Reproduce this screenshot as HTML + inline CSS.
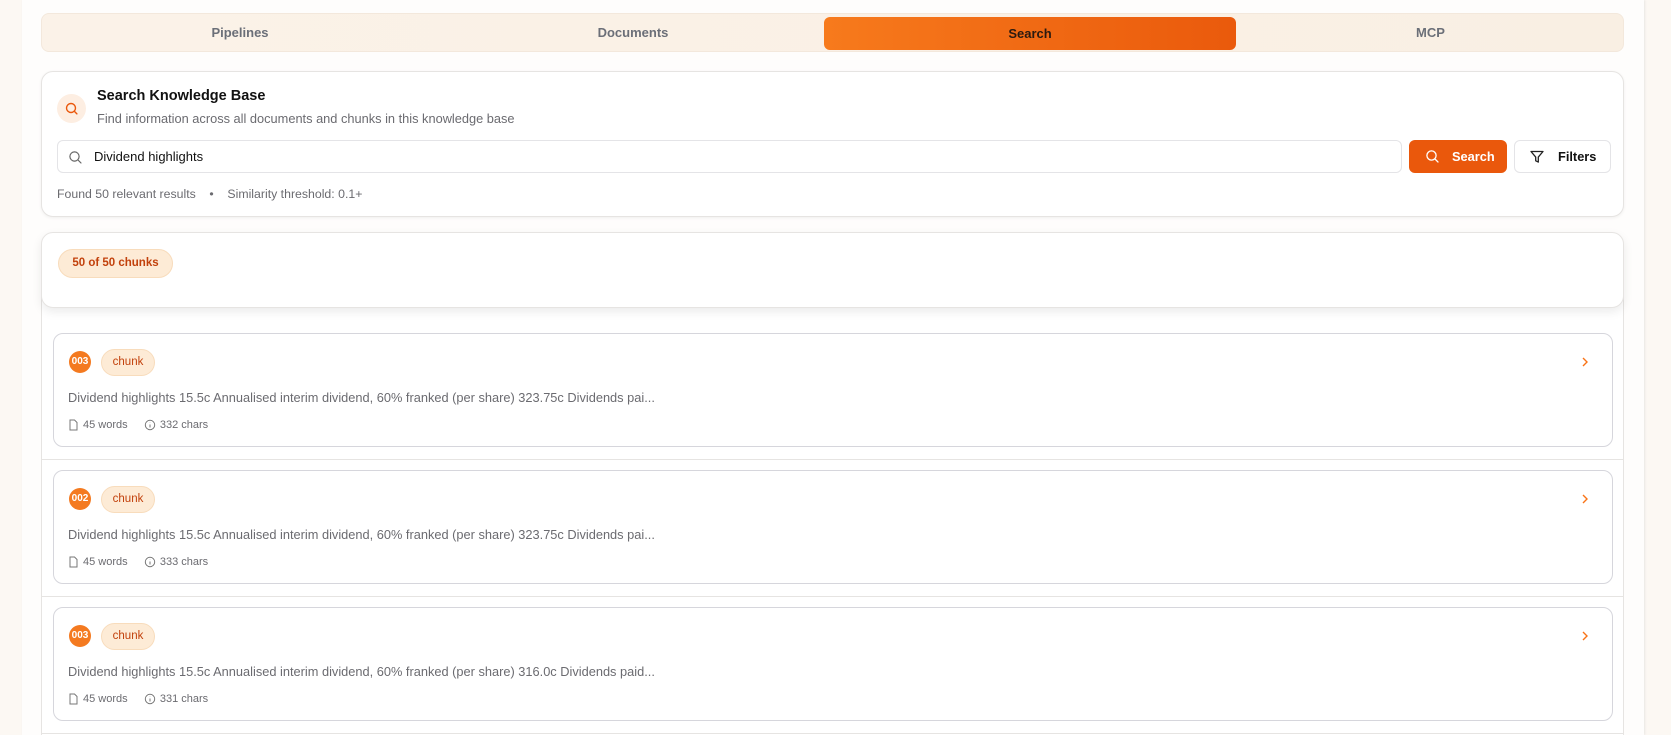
<!DOCTYPE html>
<html><head><meta charset="utf-8"><style>
*{box-sizing:border-box;margin:0;padding:0}
body{width:1671px;height:735px;overflow:hidden;background:#fcf8f3;font-family:"Liberation Sans","DejaVu Sans",sans-serif;position:relative}
.col{position:absolute;left:22px;top:0;width:1622px;height:735px;background:#fefdfc;box-shadow:1px 0 2px #e8e6e4}
.abs{position:absolute}
.tabs{left:41px;top:13px;width:1583px;height:39px;border-radius:8px;background:linear-gradient(90deg,#fbf2e8,#f9efe3);border:1px solid #f3e8dc}
.tab{position:absolute;top:0;height:37px;line-height:37px;text-align:center;font-size:13px;font-weight:bold;color:#6b6f78}
.act{left:782px;top:3px;height:33px;width:412px;border-radius:6px;background:linear-gradient(90deg,#f77a1c,#ea5a0c);color:#2a1a10;line-height:33px}
.card{background:#fff;border:1px solid #e6e4e2;border-radius:12px}
.chunk{position:absolute;left:53px;width:1560px;height:114px;border:1px solid #d6d6dc;border-radius:10px;background:#fff}
.num{position:absolute;left:15px;top:17px;width:22px;height:22px;border-radius:50%;background:#f47a20;color:#fff;font-size:10px;font-weight:bold;text-align:center;line-height:22px}
.pill{position:absolute;left:47px;top:15px;width:54px;height:27px;border-radius:14px;background:#fdebd6;border:1px solid #f8dcbc;color:#c2410c;font-size:11.5px;text-align:center;line-height:25px}
.txt{position:absolute;left:14px;top:56px;font-size:12.8px;color:#6b6b70;white-space:nowrap}
.meta{position:absolute;left:14px;top:85px;font-size:11px;color:#6b6b70;display:flex;align-items:center;gap:4px}
.chev{position:absolute;right:22px;top:22px}
.sep{position:absolute;left:41px;width:1583px;height:1px;background:#e6e4e2}
</style></head><body>
<div class="col"></div>
<div class="abs tabs">
<div class="tab" style="left:0;width:396px">Pipelines</div>
<div class="tab" style="left:396px;width:390px">Documents</div>
<div class="tab act">Search</div>
<div class="tab" style="left:1194px;width:389px">MCP</div>
</div>

<div class="abs card" style="left:41px;top:71px;width:1583px;height:146px;box-shadow:0 1px 3px rgba(0,0,0,.06)">
<div class="abs" style="left:15px;top:22px;width:29px;height:29px;border-radius:50%;background:#fdeee2"><svg width="29" height="29" viewBox="0 0 29 29"><circle cx="14" cy="14" r="4.5" fill="none" stroke="#ea580c" stroke-width="1.4"/><path d="M17.3 17.3l2.6 2.6" stroke="#ea580c" stroke-width="1.4" stroke-linecap="round"/></svg></div>
<div class="abs" style="left:55px;top:16px;font-size:14.5px;font-weight:bold;color:#111">Search Knowledge Base</div>
<div class="abs" style="left:55px;top:39px;font-size:12.8px;color:#6b6b70">Find information across all documents and chunks in this knowledge base</div>
<div class="abs" style="left:15px;top:68px;width:1345px;height:33px;border:1px solid #e4e4e7;border-radius:6px;background:#fff">
<svg class="abs" style="left:10px;top:9px" width="15" height="15" viewBox="0 0 15 15"><circle cx="6.5" cy="6.5" r="4.6" fill="none" stroke="#666" stroke-width="1.2"/><path d="M10 10l3 3" stroke="#666" stroke-width="1.2" stroke-linecap="round"/></svg>
<div class="abs" style="left:36px;top:8px;font-size:13px;color:#111">Dividend highlights</div></div>
<div class="abs" style="left:1367px;top:68px;width:98px;height:33px;border-radius:6px;background:#ea580c;color:#fff;font-size:12.8px;font-weight:bold">
<svg class="abs" style="left:16px;top:9px" width="15" height="15" viewBox="0 0 15 15"><circle cx="6.5" cy="6.5" r="4.6" fill="none" stroke="#fff" stroke-width="1.3"/><path d="M10 10l3 3" stroke="#fff" stroke-width="1.3" stroke-linecap="round"/></svg>
<span class="abs" style="left:43px;top:9px">Search</span></div>
<div class="abs" style="left:1472px;top:68px;width:97px;height:33px;border-radius:6px;border:1px solid #e4e4e7;background:#fff;color:#111;font-size:12.8px;font-weight:bold">
<svg class="abs" style="left:14px;top:8px" width="16" height="16" viewBox="0 0 16 16"><path d="M2 2.5h12l-4.7 5.6v5l-2.6-1.3v-3.7z" fill="none" stroke="#222" stroke-width="1.3" stroke-linejoin="round"/></svg>
<span class="abs" style="left:43px;top:8px">Filters</span></div>
<div class="abs" style="left:15px;top:115px;font-size:12.3px;color:#6b6b70">Found 50 relevant results &nbsp;&nbsp;&nbsp;•&nbsp;&nbsp;&nbsp; Similarity threshold: 0.1+</div>
</div>

<div class="abs" style="left:41px;top:290px;width:1583px;height:445px;border-left:1px solid #e6e4e2;border-right:1px solid #e6e4e2;background:#fff"></div>
<div class="abs card" style="left:41px;top:232px;width:1583px;height:76px;box-shadow:0 4px 10px rgba(0,0,0,.08)">
<div class="abs" style="left:16px;top:16px;width:115px;height:29px;border-radius:15px;background:#fdebd6;border:1px solid #f8dcbc;color:#c2410c;font-size:11.5px;font-weight:bold;text-align:center;line-height:27px">50 of 50 chunks</div>
</div>

<div class="chunk" style="top:333px"><div class="num">003</div><div class="pill">chunk</div>
<svg class="chev" width="10" height="12" viewBox="0 0 10 12"><path d="M3 2l4 4-4 4" fill="none" stroke="#f97316" stroke-width="1.4"/></svg>
<div class="txt">Dividend highlights 15.5c Annualised interim dividend, 60% franked (per share) 323.75c Dividends pai...</div>
<div class="meta"><svg width="11" height="12" viewBox="0 0 11 12"><path d="M2 1h4.5L9 3.5V11H2z" fill="none" stroke="#777"/></svg> 45 words &nbsp;&nbsp;&nbsp;<svg width="12" height="12" viewBox="0 0 12 12"><circle cx="6" cy="6" r="4.7" fill="none" stroke="#777"/><path d="M6 5.5v3M6 3.5v.3" stroke="#777"/></svg> 332 chars</div></div>
<div class="sep" style="top:459px"></div>

<div class="chunk" style="top:470px"><div class="num">002</div><div class="pill">chunk</div>
<svg class="chev" width="10" height="12" viewBox="0 0 10 12"><path d="M3 2l4 4-4 4" fill="none" stroke="#f97316" stroke-width="1.4"/></svg>
<div class="txt">Dividend highlights 15.5c Annualised interim dividend, 60% franked (per share) 323.75c Dividends pai...</div>
<div class="meta"><svg width="11" height="12" viewBox="0 0 11 12"><path d="M2 1h4.5L9 3.5V11H2z" fill="none" stroke="#777"/></svg> 45 words &nbsp;&nbsp;&nbsp;<svg width="12" height="12" viewBox="0 0 12 12"><circle cx="6" cy="6" r="4.7" fill="none" stroke="#777"/><path d="M6 5.5v3M6 3.5v.3" stroke="#777"/></svg> 333 chars</div></div>
<div class="sep" style="top:596px"></div>

<div class="chunk" style="top:607px"><div class="num">003</div><div class="pill">chunk</div>
<svg class="chev" width="10" height="12" viewBox="0 0 10 12"><path d="M3 2l4 4-4 4" fill="none" stroke="#f97316" stroke-width="1.4"/></svg>
<div class="txt">Dividend highlights 15.5c Annualised interim dividend, 60% franked (per share) 316.0c Dividends paid...</div>
<div class="meta"><svg width="11" height="12" viewBox="0 0 11 12"><path d="M2 1h4.5L9 3.5V11H2z" fill="none" stroke="#777"/></svg> 45 words &nbsp;&nbsp;&nbsp;<svg width="12" height="12" viewBox="0 0 12 12"><circle cx="6" cy="6" r="4.7" fill="none" stroke="#777"/><path d="M6 5.5v3M6 3.5v.3" stroke="#777"/></svg> 331 chars</div></div>
<div class="sep" style="top:733px"></div>
</body></html>
